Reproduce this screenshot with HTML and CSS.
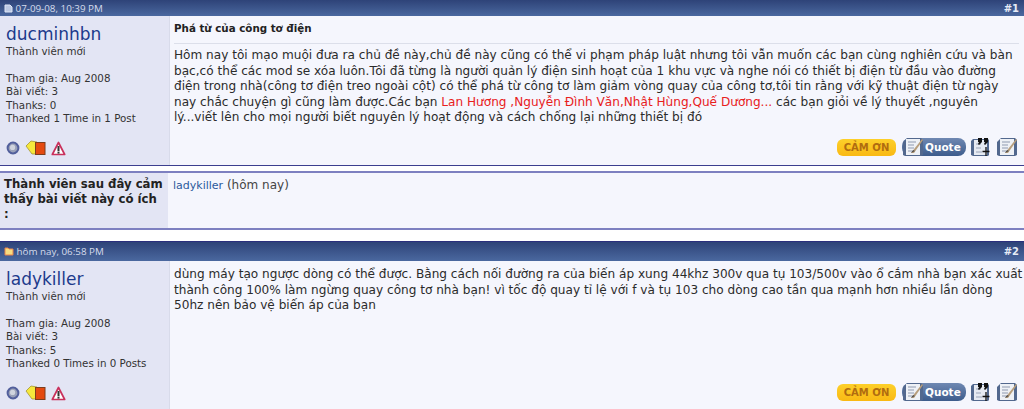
FILE: index.html
```html
<!DOCTYPE html>
<html lang="en">
<head>
    <meta charset="UTF-8">
    <title>Phá từ của công tơ điện</title>
    <link rel="stylesheet" href="styles.css">
</head>
<body>

<!-- Shared icons -->
<svg class="icon-defs" width="0" height="0">
    <symbol id="icon-online" viewBox="0 0 14 14">
        <circle cx="7" cy="7" r="5.4" fill="#9aa1b8" stroke="#525f9c" stroke-width="2"/>
        <circle cx="6.6" cy="6.4" r="2.6" fill="#d0d4de"/>
    </symbol>
    <symbol id="icon-cards" viewBox="0 0 21 16">
        <path d="M1 6l5-5 6 1v12H7z" fill="#f6e83c" stroke="#9a8a28" stroke-width=".7"/>
        <rect x="10.5" y="2.5" width="9.5" height="12" fill="#e4490f" stroke="#7d3d1c"/>
    </symbol>
    <symbol id="icon-warn" viewBox="0 0 15 15">
        <path d="M7.5 1.5L13.7 13.5H1.3z" fill="#fff" stroke="#c9315c" stroke-width="1.7" stroke-linejoin="round"/>
        <rect x="6.5" y="5" width="2" height="5" fill="#333"/>
        <rect x="6.5" y="10.6" width="2" height="2" fill="#333"/>
    </symbol>
    <symbol id="icon-page-pen" viewBox="0 0 23 20">
        <path d="M1 5l4-4h14l2 2v15l-2 1H3l-2-1z" fill="#52688e"/>
        <rect x="4" y="2" width="14" height="16" fill="#eef1f6"/>
        <path d="M6 5h8M6 8h6M6 11h6M6 14h4" stroke="#8f9ab0"/>
        <path d="M9 16L20 2l1 1-9 13z" fill="#b79e7c"/>
        <path d="M9 16l2-3 2 1z" fill="#4a4a4a"/>
    </symbol>
    <symbol id="icon-multi-quote" viewBox="0 0 23 20">
        <path d="M1 4l2-2h15l1 1v15l-1 1H3l-2-1z" fill="#52688e"/>
        <rect x="4" y="3" width="13" height="15" fill="#e6eaf2"/>
        <path d="M6 7h5M6 11h5M6 15h6" stroke="#9aa4b8"/>
        <path d="M8 1h4v4l-3 3-1-1 1-2H8zM14 1h4v4l-3 3-1-1 1-2h-1z" fill="#111"/>
        <path d="M16 10v9M12.5 14.5h7" stroke="#111" stroke-width="1.3"/>
    </symbol>
</svg>

<!-- Post 1 -->
<div class="post-head head-first">
    <span class="post-date">
        <svg class="post-icon" width="9" height="9" viewBox="0 0 9 9"><path d="M1 1h5l2 2v5H1z" fill="#bcc9e4" stroke="#dfe6f5"/></svg>
        07-09-08, 10:39 PM
    </span>
    <a class="post-num">#1</a>
</div>
<div class="post-row row-first">
    <div class="user-col">
        <a class="user-name">ducminhbn</a>
        <div class="user-title">Thành viên mới</div>
        <div class="user-info">
            <div>Tham gia: Aug 2008</div>
            <div>Bài viết: 3</div>
            <div>Thanks: 0</div>
            <div>Thanked 1 Time in 1 Post</div>
        </div>
        <div class="user-icons">
            <svg class="ic-online"><use href="#icon-online"/></svg>
            <svg class="ic-cards"><use href="#icon-cards"/></svg>
            <svg class="ic-warn"><use href="#icon-warn"/></svg>
        </div>
    </div>
    <div class="post-col">
        <div class="post-title">Phá từ của công tơ điện</div>
        <div class="post-text">Hôm nay tôi mạo muội đưa ra chủ đề này,chủ đề này cũng có thể vi phạm pháp luật nhưng tôi vẫn muốn các bạn cùng nghiên cứu và bàn<br>bạc,có thể các mod se xóa luôn.Tôi đã từng là người quản lý điện sinh hoạt của 1 khu vực và nghe nói có thiết bị điện từ đầu vào đường<br>điện trong nhà(công tơ điện treo ngoài cột) có thể phá từ công tơ làm giảm vòng quay của công tơ,tôi tin rằng với kỹ thuật điện từ ngày<br>nay chắc chuyện gì cũng làm được.Các bạn <span class="red-text">Lan Hương ,Nguyễn Đình Văn,Nhật Hùng,Quế Dương...</span> các bạn giỏi về lý thuyết ,nguyên<br>lý...viết lên cho mọi người biết nguyên lý hoạt động và cách chống lại những thiết bị đó</div>
        <div class="post-buttons">
            <span class="btn-thanks">CẢM ƠN</span>
            <span class="btn-quote"><svg class="ic-btn"><use href="#icon-page-pen"/></svg>Quote</span>
            <svg class="ic-btn"><use href="#icon-multi-quote"/></svg>
            <svg class="ic-btn ic-edit"><use href="#icon-page-pen"/></svg>
        </div>
    </div>
</div>

<!-- Thanks box -->
<div class="thanks-row">
    <div class="thanks-label">Thành viên sau đây cảm thấy bài viết này có ích :</div>
    <div class="thanks-list"><a class="thanks-user">ladykiller</a> (hôm nay)</div>
</div>

<!-- Post 2 -->
<div class="post-head head-second">
    <span class="post-date">
        <svg class="post-icon" width="10" height="10" viewBox="0 0 10 10"><path d="M1 2h3l1 1h4v6H1z" fill="#f8dc80" stroke="#e8834a"/></svg>
        hôm nay, 06:58 PM
    </span>
    <a class="post-num">#2</a>
</div>
<div class="post-row row-second">
    <div class="user-col">
        <a class="user-name">ladykiller</a>
        <div class="user-title">Thành viên mới</div>
        <div class="user-info">
            <div>Tham gia: Aug 2008</div>
            <div>Bài viết: 3</div>
            <div>Thanks: 5</div>
            <div>Thanked 0 Times in 0 Posts</div>
        </div>
        <div class="user-icons">
            <svg class="ic-online"><use href="#icon-online"/></svg>
            <svg class="ic-cards"><use href="#icon-cards"/></svg>
            <svg class="ic-warn"><use href="#icon-warn"/></svg>
        </div>
    </div>
    <div class="post-col">
        <div class="post-text">dùng máy tạo ngược dòng có thể được. Bằng cách nối đường ra của biến áp xung 44khz 300v qua tụ 103/500v vào ổ cắm nhà bạn xác xuất<br>thành công 100% làm ngừng quay công tơ nhà bạn! vì tốc độ quay tỉ lệ với f và tụ 103 cho dòng cao tần qua mạnh hơn nhiều lần dòng<br>50hz nên bảo vệ biến áp của bạn</div>
        <div class="post-buttons">
            <span class="btn-thanks">CẢM ƠN</span>
            <span class="btn-quote"><svg class="ic-btn"><use href="#icon-page-pen"/></svg>Quote</span>
            <svg class="ic-btn"><use href="#icon-multi-quote"/></svg>
            <svg class="ic-btn ic-edit"><use href="#icon-page-pen"/></svg>
        </div>
    </div>
</div>

</body>
</html>
```

FILE: styles.css
```css
html, body {
    margin: 0;
    padding: 0;
    background: #ffffff;
    overflow: hidden;
    height: 409px;
    font-family: "DejaVu Sans", Verdana, sans-serif;
    font-size: 11px;
    color: #222;
}

.icon-defs {
    display: block;
    height: 0;
}

/* Post header bar */
.post-head {
    display: flex;
    justify-content: space-between;
    align-items: center;
    background: linear-gradient(#2e4378, #4a689f);
    color: #d5dcec;
    font-family: "Open Sans", sans-serif;
    font-size: 9.8px;
    padding: 0 5px 0 4px;
}

.head-first {
    height: 16px;
}

.head-second {
    height: 19px;
    margin-top: 11px;
    border-top: 1px solid #2a2f7c;
}

.post-icon {
    vertical-align: -1px;
}

.post-num {
    font-family: "DejaVu Sans", sans-serif;
    font-weight: bold;
    font-size: 10px;
    color: #e6ebf6;
}

/* Post row */
.post-row {
    display: flex;
}

.row-first {
    height: 149px;
    border-bottom: 1px solid #3c3f8f;
}

.row-second {
    height: 149px;
}

.user-col {
    width: 170px;
    flex: none;
    box-sizing: border-box;
    background: #e3e5f4;
    padding: 8px 6px 0;
    border-right: 1px solid #d8dbea;
    display: flex;
    flex-direction: column;
    font-size: 10.3px;
    line-height: 13.6px;
    color: #333;
}

.user-name {
    color: #1c3a8c;
    font-size: 17px;
    line-height: 20px;
}

.user-title {
    margin-top: 1px;
    margin-bottom: 13px;
}

.user-icons {
    display: flex;
    align-items: center;
    gap: 5px;
    margin-top: auto;
    margin-bottom: 9px;
}

.ic-online {
    width: 14px;
    height: 14px;
}

.ic-cards {
    width: 21px;
    height: 16px;
}

.ic-warn {
    width: 15px;
    height: 15px;
}

.post-col {
    flex: 1;
    background: #f5f6fd;
    padding: 5px 5px 8px 4px;
    display: flex;
    flex-direction: column;
    min-width: 0;
}

.post-title {
    font-weight: bold;
    font-size: 10.3px;
    line-height: 15px;
    padding-bottom: 7px;
    margin-bottom: 4px;
    border-bottom: 1px solid #dcdfea;
}

.post-text {
    line-height: 15.5px;
    font-size: 12.1px;
    white-space: nowrap;
    color: #2b2b2b;
}

.row-second .post-text {
    margin-top: 1px;
}

.red-text {
    color: #e8201c;
}

/* Buttons under a post */
.post-buttons {
    display: flex;
    align-items: center;
    justify-content: flex-end;
    gap: 4px;
    margin-top: auto;
}

.btn-thanks {
    background: linear-gradient(#fdd02a, #f9b914);
    color: #b06c10;
    font-size: 10px;
    font-weight: bold;
    border-radius: 6px;
    width: 59px;
    height: 17px;
    line-height: 17px;
    text-align: center;
    margin-right: 2px;
}

.btn-quote {
    display: flex;
    align-items: center;
    background: linear-gradient(#6f88b2, #3d5c8c);
    color: #fff;
    font-size: 10.5px;
    font-weight: bold;
    border-radius: 8px;
    height: 18px;
    width: 64px;
}

.ic-btn {
    width: 23px;
    height: 20px;
    flex: none;
}

.ic-edit {
    margin-left: -1px;
}

/* Thanks box */
.thanks-row {
    display: flex;
    margin-top: 5px;
    border-top: 2px solid #7d80c0;
    border-bottom: 2px solid #7d80c0;
    height: 55px;
}

.thanks-label {
    width: 168px;
    flex: none;
    box-sizing: border-box;
    background: #e3e5f4;
    padding: 4px 4px 0 4px;
    font-weight: bold;
    font-size: 11.7px;
    line-height: 15px;
    color: #222;
}

.thanks-list {
    flex: 1;
    padding: 5px 5px;
    background: #f5f6fd;
    font-size: 12px;
    line-height: 15px;
    color: #444;
}

.thanks-user {
    color: #2c5a9c;
    font-size: 11px;
}
```
